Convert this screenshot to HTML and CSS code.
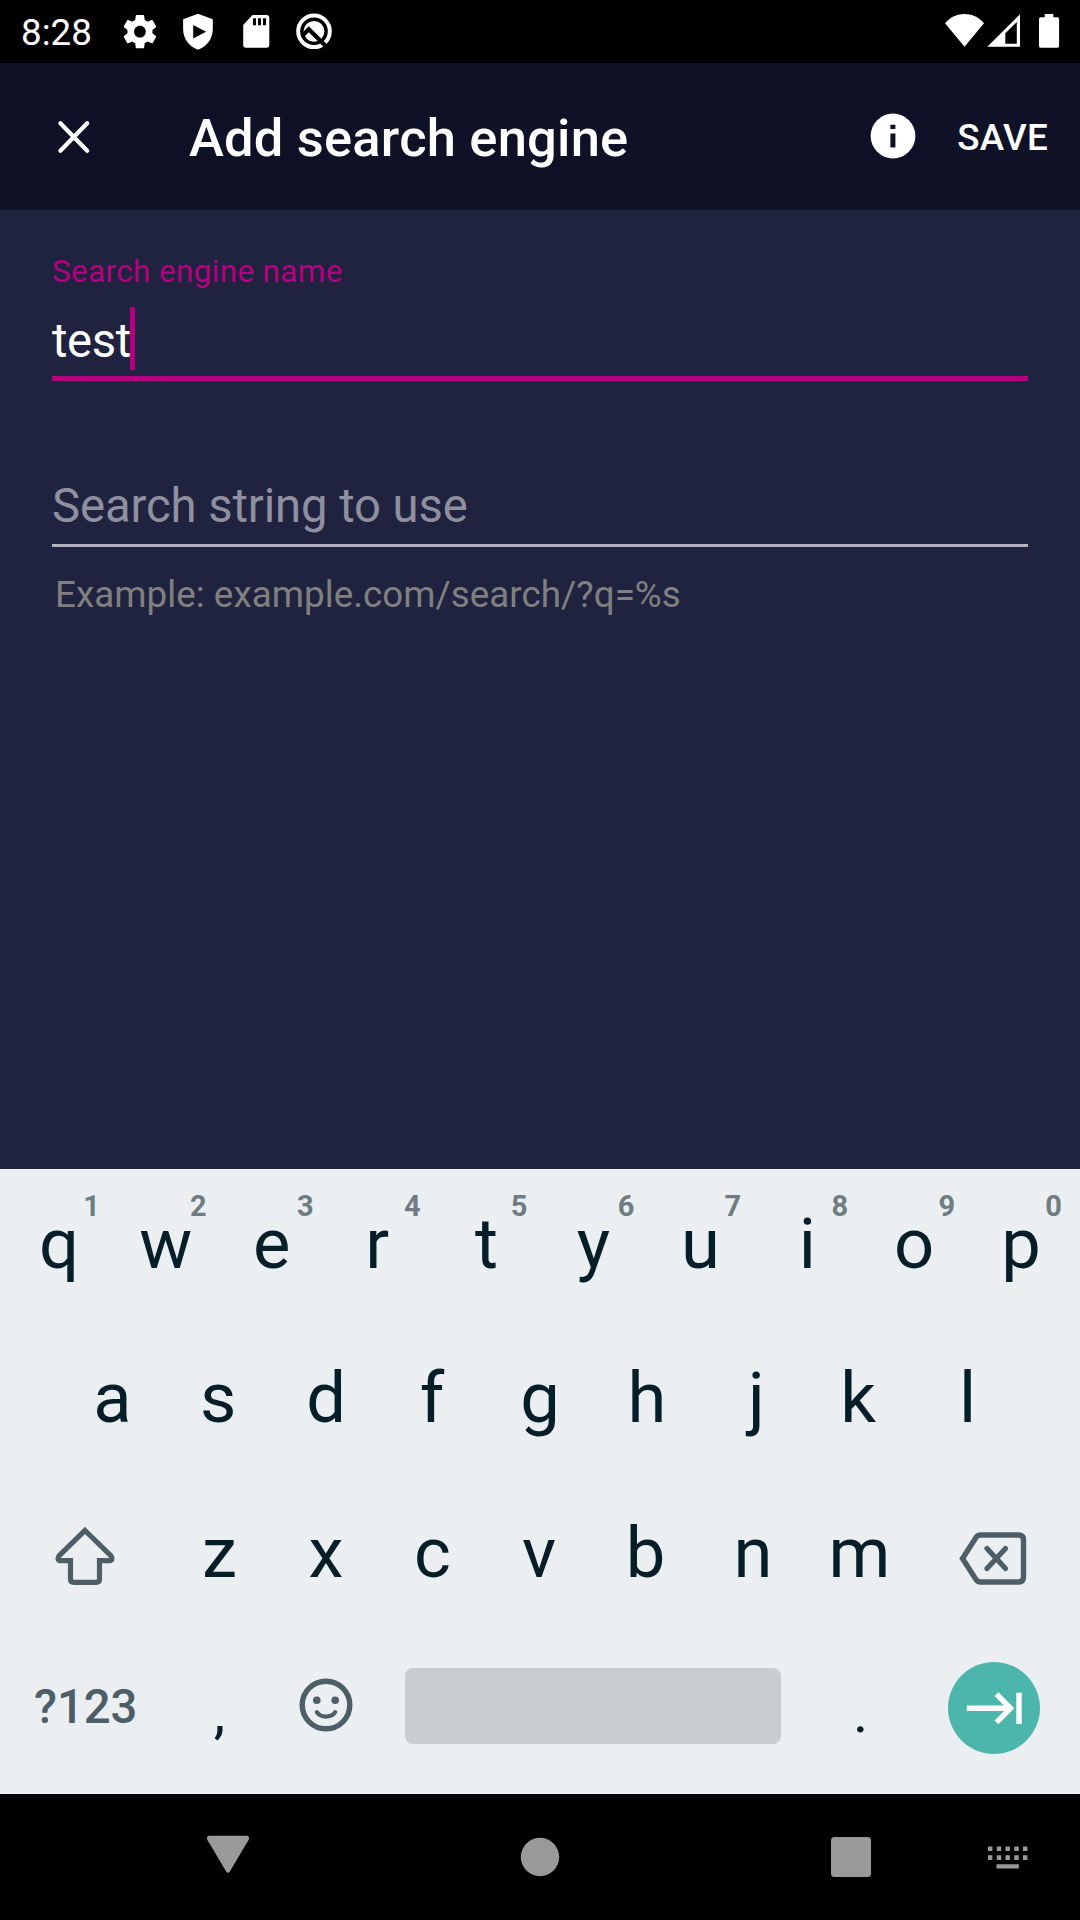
FILE: index.html
```html
<!DOCTYPE html>
<html lang="en">
<head>
<meta charset="utf-8">
<title>Add search engine</title>
<link rel="stylesheet" href="styles.css">
</head>
<body>
<div class="screen">
  <header class="status">
    <span class="clock">8:28</span>
    <svg class="status-notifications" width="240" height="63" viewBox="110 0 240 63">
      <g fill="#fff">
        <path transform="translate(119.9 11.6) scale(1.67)" d="M19.43 12.98c.04-.32.07-.64.07-.98s-.03-.66-.07-.98l2.11-1.65c.19-.15.24-.42.12-.64l-2-3.46c-.12-.22-.39-.3-.61-.22l-2.49 1c-.52-.4-1.08-.73-1.69-.98l-.38-2.65C14.46 2.18 14.25 2 14 2h-4c-.25 0-.46.18-.49.42l-.38 2.65c-.61.25-1.17.59-1.69.98l-2.49-1c-.23-.09-.49 0-.61.22l-2 3.46c-.13.22-.07.49.12.64l2.11 1.65c-.04.32-.07.65-.07.98s.03.66.07.98l-2.11 1.65c-.19.15-.24.42-.12.64l2 3.46c.12.22.39.3.61.22l2.49-1c.52.4 1.08.73 1.69.98l.38 2.65c.03.24.24.42.49.42h4c.25 0 .46-.18.49-.42l.38-2.65c.61-.25 1.17-.59 1.69-.98l2.49 1c.23.09.49 0 .61-.22l2-3.46c.12-.22.07-.49-.12-.64l-2.11-1.65zM12 15.5c-1.93 0-3.5-1.57-3.5-3.5s1.57-3.5 3.5-3.5 3.5 1.57 3.5 3.5-1.57 3.500-3.500 3.500z"/>
        <path fill-rule="evenodd" d="M198 13.700 212.800 19.300V29c0 9.500-5.800 17.500-14.800 20.800-9-3.300-14.900-11.300-14.900-20.800v-9.700zM193.200 25v13.600l12.900-6.800z"/>
        <path fill-rule="evenodd" d="M252.500 15h14q2.800 0 2.800 2.800v27.200q0 2.800-2.800 2.800h-20.500q-2.800 0-2.800-2.800V25zM253 18.300v7h3v-7zM258 18.300v7h3v-7zM263 18.300v7h3v-7z"/>
        <circle cx="314" cy="31.300" r="10.400"/>
      </g>
      <circle cx="314" cy="31.300" r="15.800" fill="none" stroke="#fff" stroke-width="4"/>
      <path d="M302 36 308.800 29.200 327 47.200" fill="none" stroke="#000" stroke-width="4.200"/>
    </svg>
    <svg class="status-system" width="130" height="63" viewBox="940 0 130 63">
      <g fill="#fff">
        <path d="M945 23.200C955.500 11 973.500 11 984 23.200L964.500 46.700z"/>
        <path fill-rule="evenodd" d="M987.300 46.800 1020 14.200V46.800zM1005.300 33.300V43.700H1016.800V22z"/>
        <path d="M1044.700 14h8.600v3.300h4q1.800 0 1.800 1.800v26.900q0 1.800-1.800 1.800h-16.500q-1.800 0-1.800-1.800V19.100q0-1.800 1.800-1.800h3.900z"/>
      </g>
    </svg>
  </header>

  <div class="appbar">
    <svg class="close" width="40" height="40" viewBox="0 0 40 40"><path d="M6.400 6.200 33.200 33.700M33.200 6.200 6.400 33.700" stroke="#fff" stroke-width="4.200" stroke-linecap="round"/></svg>
    <h1 class="title">Add search engine</h1>
    <svg class="info" width="46" height="46" viewBox="0 0 46 46"><circle cx="23" cy="23" r="22.400" fill="#fff"/><path d="M20.400 11.700h5v4.400h-5zM20.400 20.500h5v14h-5z" fill="#0f1126"/></svg>
    <span class="save">SAVE</span>
  </div>

  <main class="form">
    <label class="label">Search engine name</label>
    <div class="field field-active"><span class="value">test</span><span class="caret"></span></div>
    <div class="field field-empty">Search string to use</div>
    <p class="example">Example: example.com/search/?q=%s</p>
  </main>

  <section class="keyboard">
    <div class="row">
      <div class="key">q<sup>1</sup></div><div class="key">w<sup>2</sup></div><div class="key key-left">e<sup>3</sup></div><div class="key key-far-left">r<sup>4</sup></div><div class="key">t<sup>5</sup></div><div class="key">y<sup>6</sup></div><div class="key">u<sup>7</sup></div><div class="key">i<sup>8</sup></div><div class="key">o<sup>9</sup></div><div class="key">p<sup>0</sup></div>
    </div>
    <div class="row row-inset">
      <div class="key">a</div><div class="key key-left">s</div><div class="key">d</div><div class="key key-left">f</div><div class="key">g</div><div class="key">h</div><div class="key key-right">j</div><div class="key key-far-left">k</div><div class="key">l</div>
    </div>
    <div class="row">
      <div class="key key-wide key-shift"><svg width="62" height="62" viewBox="0 0 62 62"><path d="M31 4.500 57 29.800Q59.500 34.600 55 34.600H45.500V53q0 3.300-3.300 3.300H19.800q-3.300 0-3.300-3.300V34.600H7Q2.500 34.600 5 29.800z" fill="none" stroke="#4d5e67" stroke-width="5.200"/></svg></div>
      <div class="key key-left">z</div><div class="key key-left">x</div><div class="key key-left">c</div><div class="key key-left">v</div><div class="key key-left">b</div><div class="key">n</div><div class="key">m</div>
      <div class="key key-wide key-delete"><svg width="70" height="58" viewBox="0 0 70 58"><path d="M22.500 5H60.500q5 0 5 5V47q0 5-5 5H22.500q-3 0-4.600-2.600L4.500 28.500 17.900 7.600Q19.500 5 22.500 5z" fill="none" stroke="#4d5e67" stroke-width="5.400"/><path d="M29 18.500 47.500 38.500M47.500 18.500 29 38.500" stroke="#4d5e67" stroke-width="5.200" stroke-linecap="round"/></svg></div>
    </div>
    <div class="row row-bottom">
      <div class="key key-wide key-symbols">?123</div>
      <div class="key key-punct">,</div>
      <div class="key"><svg width="54" height="54" viewBox="0 0 54 54"><circle cx="27" cy="27" r="23.800" fill="none" stroke="#4d5e67" stroke-width="5.400"/><circle cx="17.800" cy="22.300" r="3.800" fill="#4d5e67"/><circle cx="36.200" cy="22.300" r="3.800" fill="#4d5e67"/><path d="M17.800 34.200Q20.800 38.700 27 38.700T36.200 34.200" fill="none" stroke="#4d5e67" stroke-width="4.200" stroke-linecap="round"/></svg></div>
      <div class="space"></div>
      <div class="key key-punct">.</div>
      <div class="key key-wide key-next"><svg width="92" height="92" viewBox="0 0 92 92"><circle cx="46" cy="46" r="46" fill="#4db6ac"/><path d="M18.800 46.300H62M48.500 32.200 62.500 46.300 48.500 60.400M71 30.700V62" fill="none" stroke="#fff" stroke-width="5.400"/></svg></div>
    </div>
  </section>

  <nav class="navbar">
    <svg width="1080" height="126" viewBox="0 1794 1080 126" fill="#999">
      <path d="M208.500 1835.700H247.500Q250 1837 248.600 1840L230 1871.200Q228 1874.300 226 1871.200L207.400 1840Q206 1837 208.500 1835.700z"/>
      <circle cx="540" cy="1857" r="19.200"/>
      <rect x="831" y="1837" width="40" height="40" rx="3.500"/>
      <path d="M988 1846.500h4.400v4.600h-4.400zM996.800 1846.500h4.400v4.600h-4.400zM1005.500 1846.500h4.400v4.600h-4.400zM1014.300 1846.500h4.400v4.600h-4.400zM1023 1846.500h4.400v4.600h-4.400zM988 1855.300h4.400v4.600h-4.400zM996.800 1855.300h4.400v4.600h-4.400zM1005.500 1855.300h4.400v4.600h-4.400zM1014.300 1855.300h4.400v4.600h-4.400zM1023 1855.300h4.400v4.600h-4.400zM996.500 1864.200h22.300v4.400h-22.300z"/>
    </svg>
  </nav>
</div>
</body>
</html>
```

FILE: styles.css
```css
* { box-sizing: border-box; }

body {
  margin: 0;
  font-family: Roboto, "Liberation Sans", sans-serif;
}

.screen {
  width: 1080px;
  height: 1920px;
  display: flex;
  flex-direction: column;
  overflow: hidden;
  background: #20233f;
}

svg { display: block; flex: none; }

/* Status bar */
.status {
  height: 63px;
  flex: none;
  display: flex;
  align-items: center;
  background: #000;
  color: #fff;
}
.clock {
  width: 110px;
  padding: 1px 0 0 21px;
  font-size: 36.75px;
  line-height: 43px;
}
.status-system { margin-left: auto; margin-right: 10px; }

/* App bar */
.appbar {
  height: 147px;
  flex: none;
  display: flex;
  align-items: center;
  padding: 0 32px 0 54px;
  background: #0f1126;
  color: #fff;
}
.title {
  margin: 0 auto 0 95px;
  padding-top: 3px;
  font-size: 52.5px;
  font-weight: 500;
  line-height: 62px;
  letter-spacing: .2px;
}
.info { margin: 0 41px 2px 0; }
.save {
  padding-top: 2px;
  font-size: 36.75px;
  font-weight: 500;
  line-height: 44px;
  letter-spacing: .3px;
}

/* Form */
.form {
  flex: 1;
  padding: 43px 52px 0;
}
.label {
  display: block;
  font-size: 31.5px;
  line-height: 38px;
  letter-spacing: .33px;
  color: #b5007f;
}
.field {
  display: flex;
  font-size: 47.25px;
  line-height: 56px;
}
.field-active {
  height: 74px;
  margin-top: 16px;
  border-bottom: 5px solid #b5007f;
  color: #fff;
}
.value { padding-top: 6px; width: 78px; letter-spacing: -.35px; }
.caret { width: 5px; height: 63px; background: #b5007f; }
.field-empty {
  height: 69px;
  margin-top: 97px;
  border-bottom: 3px solid #b4b3bf;
  letter-spacing: -.1px;
  color: #8f909f;
}
.example {
  margin: 26px 0 0 3px;
  font-size: 36.75px;
  line-height: 44px;
  letter-spacing: .05px;
  color: #808080;
}

/* Keyboard */
.keyboard {
  height: 625px;
  flex: none;
  padding: 0 5.5px;
  background: #ebeff2;
  color: #051e28;
}
.row { display: flex; height: 154.5px; }
.row-inset { padding: 0 53.45px; }
.key {
  position: relative;
  flex: 1 1 0;
  display: flex;
  align-items: center;
  justify-content: center;
  padding-bottom: 5px;
  font-size: 70.5px;
  line-height: 82px;
}
.key sup {
  position: absolute;
  top: 19px;
  left: 66px;
  width: 40px;
  text-align: center;
  font-size: 29px;
  font-weight: 700;
  line-height: 36px;
  color: #6f7c82;
}
.key-left { text-indent: -2px; }
.key-far-left { text-indent: -5px; }
.key-right { text-indent: 5px; }
.key-left sup, .key-far-left sup { text-indent: 0; }

.key-wide { flex-grow: 1.5; }
.key-shift { padding: 3px 2px 0 0; }
.key-delete { padding: 7px 2px 0 0; }
.row-bottom .key { padding-bottom: 9px; }
.row-bottom .key-symbols {
  padding-bottom: 6px;
  font-size: 47.25px;
  font-weight: 500;
  color: #4d5e67;
}
.row-bottom .key-punct { padding: 5px 0 0; font-size: 58px; }
.row-bottom .key-next { padding-bottom: 4px; }
.space {
  flex: none;
  width: 376px;
  height: 76px;
  margin: 35px 26px 0 25.5px;
  border-radius: 8px;
  background: #c9cdd0;
}

/* Navigation bar */
.navbar { height: 126px; flex: none; background: #000; }
```
